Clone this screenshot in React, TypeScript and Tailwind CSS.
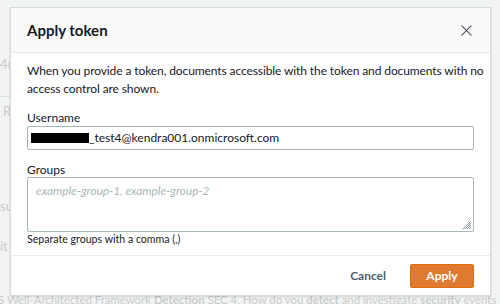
import React from "react";

function CloseIcon() {
  return (
    <svg viewBox="0 0 12 12" className="h-[11px] w-[11px]" fill="none">
      <path d="M1 1l10 10M11 1L1 11" stroke="#545b64" strokeWidth="1.4" strokeLinecap="round" />
    </svg>
  );
}

export default function App() {
  return (
    <div className="relative h-[304px] w-[500px] overflow-hidden bg-[#f2f3f3] font-['Lato',sans-serif]">
      {/* faded page behind the modal */}
      <div className="absolute left-0 top-[55px] text-[13px] text-[#c9cccc]">4@</div>
      <div className="absolute left-0 top-[96px] h-[1px] w-[12px] bg-[#dde0e0]" />
      <div className="absolute left-[3px] top-[102px] text-[13px] text-[#c9cccc]">R</div>
      <div className="absolute left-0 top-[197px] text-[13px] text-[#c9cccc]">su</div>
      <div className="absolute left-0 top-[237px] text-[13px] text-[#c9cccc]">it</div>
      <div className="absolute left-[-2px] top-[292px] whitespace-nowrap text-[11.4px] leading-[16px] text-[#c9cccc]">
        S Well-Architected Framework <span className="font-bold">Detection</span> SEC 4. How do you <span className="font-bold">detect</span> and investigate <span className="font-bold">security</span> events
      </div>

      {/* modal */}
      <div className="absolute left-[10px] top-[7px] flex h-[289px] w-[481px] flex-col border border-[#d5dbdb] bg-white shadow-[0_1px_2px_rgba(0,0,0,0.15)]">
        <div className="flex h-[45px] items-center justify-between border-b border-[#eaeded] bg-[#fafafa] pl-[16px] pr-[18px]">
          <span className="text-[15px] font-bold text-[#16191f]">Apply token</span>
          <CloseIcon />
        </div>

        <div className="flex flex-1 flex-col border-b border-[#eaeded] px-[16px] pt-[9px]">
          <p className="whitespace-nowrap text-[12px] leading-[18px] tracking-[-0.1px] text-[#16191f]">
            When you provide a token, documents accessible with the token and documents with no
            <br />
            access control are shown.
          </p>

          <label className="mt-[12px] text-[12px] leading-[16px] text-[#16191f]">Username</label>
          <div className="flex h-[24px] items-center rounded-[2px] border border-[#aab7b8] px-[3px] text-[12px] text-[#16191f]">
            <span className="inline-block h-[10px] w-[58px] bg-black" />
            _test4@kendra001.onmicrosoft.com
          </div>

          <label className="mt-[13px] text-[12px] leading-[14px] text-[#16191f]">Groups</label>
          <div className="relative h-[55px] rounded-[2px] border border-[#aab7b8] px-[8px] pt-[4px] text-[11.8px] italic text-[#aab7b8]">
            example-group-1, example-group-2
            <svg viewBox="0 0 10 10" className="absolute bottom-[1px] right-[1px] h-[10px] w-[10px]">
              <path d="M9 3L3 9M9 5L5 9M9 7L7 9M9 1L1 9" stroke="#687078" strokeWidth="0.8" />
            </svg>
          </div>
          <div className="text-[10.6px] leading-[14px] text-[#16191f]">Separate groups with a comma (,)</div>
        </div>

        <div className="flex h-[39px] items-center justify-end gap-[24px] pr-[16px]">
          <span className="text-[12px] font-bold text-[#545b64]">Cancel</span>
          <span className="flex h-[24px] w-[64px] items-center justify-center rounded-[2px] border border-[#dd6b10] bg-[#e07a30] text-[12px] font-bold text-white">
            Apply
          </span>
        </div>
      </div>
    </div>
  );
}
